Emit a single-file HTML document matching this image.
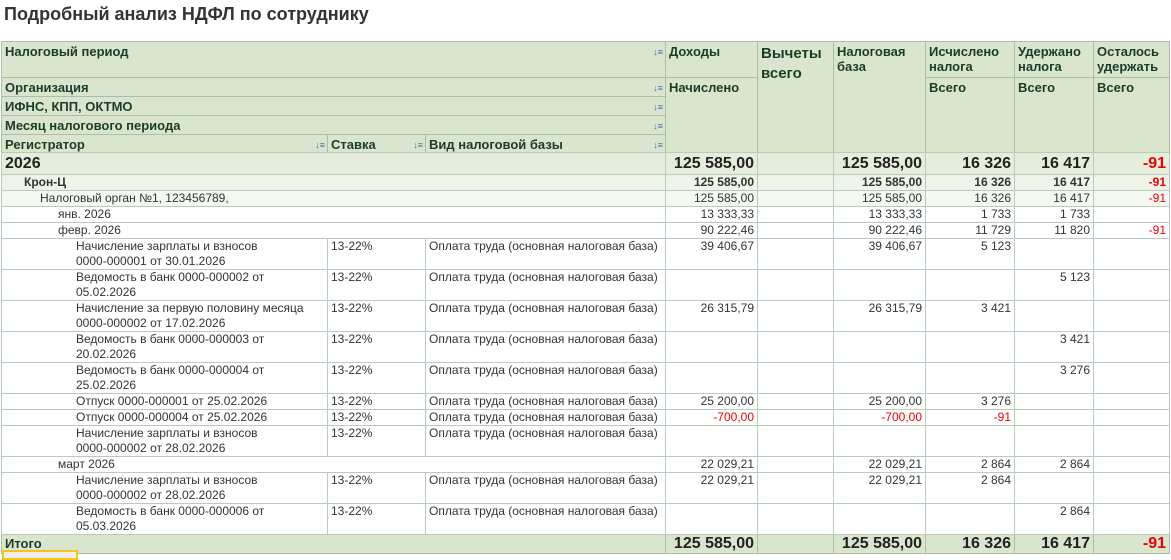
<!DOCTYPE html><html><head><meta charset="utf-8"><style>
body{margin:0;width:1171px;height:557px;background:#fff;font-family:"Liberation Sans",Arial,sans-serif;position:relative;overflow:hidden}
.t{position:absolute;left:4px;top:4px;font-size:18px;font-weight:bold;color:#333}
.h{position:absolute;background:#d9e5cd;border:1px solid #a9bfa9;box-sizing:border-box;font-size:13px;font-weight:bold;color:#1a3d2a;padding:2px 3px;line-height:15px}
.s{position:absolute;right:2px;top:3px;font-size:9px;color:#3a6fb0;font-weight:normal}
table{position:absolute;left:1px;top:152px;border-collapse:collapse;table-layout:fixed;font-size:12px;color:#333}
td{border:1px solid #b7cdb7;padding:0 3px;vertical-align:top;line-height:15px;white-space:nowrap;overflow:hidden}
td.r{text-align:right}
tr.y td{background:#e5eedd;font-size:16px;font-weight:bold;height:21px;line-height:21px;color:#222}
tr.o td{background:#eef4e9;font-weight:bold;font-size:12px}
tr.n td{background:#f4f8f1}
tr.tot td{background:#d9e5cd;font-size:16px;font-weight:bold;height:18px;line-height:18px;color:#222;border-color:#a9bfa9}
tr.tot td.l{font-size:13px;color:#1a3d2a}
tr td.red{color:#e00}
tr.d td{height:30px}
tr.s1 td{height:15px}
</style></head><body>
<div class="t">Подробный анализ НДФЛ по сотруднику</div>
<div class="h" style="left:1px;top:41px;width:665px;height:37px">Налоговый период<span class="s">↓≡</span></div>
<div class="h" style="left:1px;top:77px;width:665px;height:20px">Организация<span class="s">↓≡</span></div>
<div class="h" style="left:1px;top:96px;width:665px;height:20px">ИФНС, КПП, ОКТМО<span class="s">↓≡</span></div>
<div class="h" style="left:1px;top:115px;width:665px;height:20px">Месяц налогового периода<span class="s">↓≡</span></div>
<div class="h" style="left:1px;top:134px;width:327px;height:19px">Регистратор<span class="s">↓≡</span></div>
<div class="h" style="left:327px;top:134px;width:99px;height:19px">Ставка<span class="s">↓≡</span></div>
<div class="h" style="left:425px;top:134px;width:241px;height:19px">Вид налоговой базы<span class="s">↓≡</span></div>
<div class="h" style="left:665px;top:41px;width:93px;height:37px">Доходы</div>
<div class="h" style="left:665px;top:77px;width:93px;height:76px">Начислено</div>
<div class="h" style="left:757px;top:41px;width:77px;height:112px;font-size:15px;line-height:20px">Вычеты всего</div>
<div class="h" style="left:833px;top:41px;width:93px;height:112px">Налоговая база</div>
<div class="h" style="left:925px;top:41px;width:90px;height:37px">Исчислено налога</div>
<div class="h" style="left:925px;top:77px;width:90px;height:76px">Всего</div>
<div class="h" style="left:1014px;top:41px;width:80px;height:37px">Удержано налога</div>
<div class="h" style="left:1014px;top:77px;width:80px;height:76px">Всего</div>
<div class="h" style="left:1093px;top:41px;width:77px;height:37px">Осталось удержать</div>
<div class="h" style="left:1093px;top:77px;width:77px;height:76px">Всего</div>
<table>
<colgroup><col style="width:326px"><col style="width:98px"><col style="width:240px"><col style="width:92px"><col style="width:76px"><col style="width:92px"><col style="width:89px"><col style="width:79px"><col style="width:76px"></colgroup>
<tr class="y"><td colspan="3">2026</td><td class="r">125 585,00</td><td></td><td class="r">125 585,00</td><td class="r">16 326</td><td class="r">16 417</td><td class="r red">-91</td></tr>
<tr class="o s1"><td colspan="3" style="padding-left:22px">Крон-Ц</td><td class="r">125 585,00</td><td></td><td class="r">125 585,00</td><td class="r">16 326</td><td class="r">16 417</td><td class="r red">-91</td></tr>
<tr class="n s1"><td colspan="3" style="padding-left:38px">Налоговый орган №1, 123456789,</td><td class="r">125 585,00</td><td></td><td class="r">125 585,00</td><td class="r">16 326</td><td class="r">16 417</td><td class="r red">-91</td></tr>
<tr class="s1"><td colspan="3" style="padding-left:56px">янв. 2026</td><td class="r">13 333,33</td><td></td><td class="r">13 333,33</td><td class="r">1 733</td><td class="r">1 733</td><td></td></tr>
<tr class="s1"><td colspan="3" style="padding-left:56px">февр. 2026</td><td class="r">90 222,46</td><td></td><td class="r">90 222,46</td><td class="r">11 729</td><td class="r">11 820</td><td class="r red">-91</td></tr>
<tr class="d"><td style="padding-left:74px">Начисление зарплаты и взносов<br>0000-000001 от 30.01.2026</td><td>13-22%</td><td>Оплата труда (основная налоговая база)</td><td class="r">39 406,67</td><td></td><td class="r">39 406,67</td><td class="r">5 123</td><td></td><td></td></tr>
<tr class="d"><td style="padding-left:74px">Ведомость в банк 0000-000002 от<br>05.02.2026</td><td>13-22%</td><td>Оплата труда (основная налоговая база)</td><td></td><td></td><td></td><td></td><td class="r">5 123</td><td></td></tr>
<tr class="d"><td style="padding-left:74px">Начисление за первую половину месяца<br>0000-000002 от 17.02.2026</td><td>13-22%</td><td>Оплата труда (основная налоговая база)</td><td class="r">26 315,79</td><td></td><td class="r">26 315,79</td><td class="r">3 421</td><td></td><td></td></tr>
<tr class="d"><td style="padding-left:74px">Ведомость в банк 0000-000003 от<br>20.02.2026</td><td>13-22%</td><td>Оплата труда (основная налоговая база)</td><td></td><td></td><td></td><td></td><td class="r">3 421</td><td></td></tr>
<tr class="d"><td style="padding-left:74px">Ведомость в банк 0000-000004 от<br>25.02.2026</td><td>13-22%</td><td>Оплата труда (основная налоговая база)</td><td></td><td></td><td></td><td></td><td class="r">3 276</td><td></td></tr>
<tr class="s1"><td style="padding-left:74px">Отпуск 0000-000001 от 25.02.2026</td><td>13-22%</td><td>Оплата труда (основная налоговая база)</td><td class="r">25 200,00</td><td></td><td class="r">25 200,00</td><td class="r">3 276</td><td></td><td></td></tr>
<tr class="s1"><td style="padding-left:74px">Отпуск 0000-000004 от 25.02.2026</td><td>13-22%</td><td>Оплата труда (основная налоговая база)</td><td class="r red">-700,00</td><td></td><td class="r red">-700,00</td><td class="r red">-91</td><td></td><td></td></tr>
<tr class="d"><td style="padding-left:74px">Начисление зарплаты и взносов<br>0000-000002 от 28.02.2026</td><td>13-22%</td><td>Оплата труда (основная налоговая база)</td><td></td><td></td><td></td><td></td><td></td><td></td></tr>
<tr class="s1"><td colspan="3" style="padding-left:56px">март 2026</td><td class="r">22 029,21</td><td></td><td class="r">22 029,21</td><td class="r">2 864</td><td class="r">2 864</td><td></td></tr>
<tr class="d"><td style="padding-left:74px">Начисление зарплаты и взносов<br>0000-000002 от 28.02.2026</td><td>13-22%</td><td>Оплата труда (основная налоговая база)</td><td class="r">22 029,21</td><td></td><td class="r">22 029,21</td><td class="r">2 864</td><td></td><td></td></tr>
<tr class="d"><td style="padding-left:74px">Ведомость в банк 0000-000006 от<br>05.03.2026</td><td>13-22%</td><td>Оплата труда (основная налоговая база)</td><td></td><td></td><td></td><td></td><td class="r">2 864</td><td></td></tr>
<tr class="tot"><td colspan="3" class="l">Итого</td><td class="r">125 585,00</td><td></td><td class="r">125 585,00</td><td class="r">16 326</td><td class="r">16 417</td><td class="r red">-91</td></tr>
</table>
<div style="position:absolute;left:2px;top:550px;width:76px;height:10px;border:2px solid #f5c518;box-sizing:border-box;background:#eee"></div>
</body></html>
